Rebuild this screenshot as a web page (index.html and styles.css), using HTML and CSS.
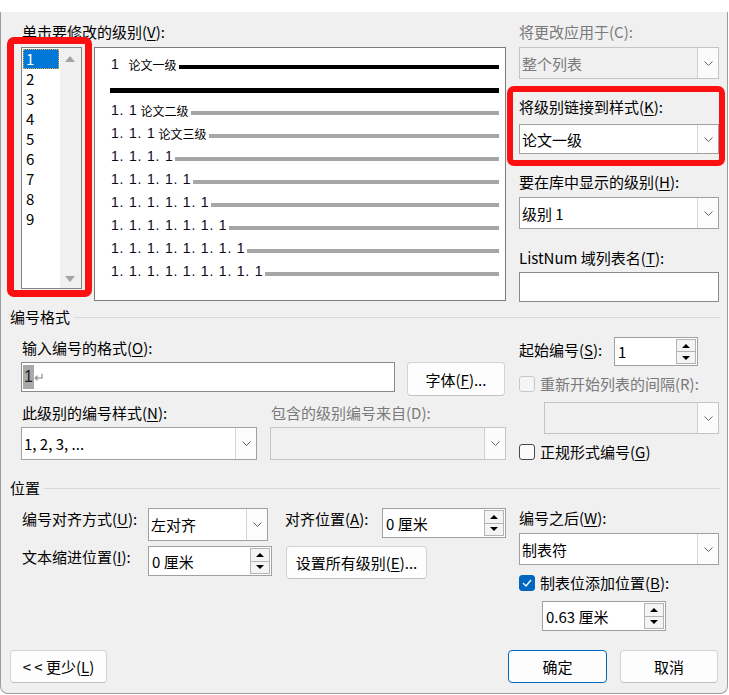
FILE: index.html
```html
<!DOCTYPE html>
<html lang="zh-CN">
<head>
<meta charset="utf-8">
<title>定义新多级列表</title>
<link rel="stylesheet" href="styles.css">
</head>
<body>
<div class="dialog">
  <div class="top">
    <div class="top-left">
      <div class="label lead">单击要修改的级别(<u>V</u>):</div>
      <div class="level-row">
        <div class="listbox">
          <ul class="list-items">
            <li class="sel">1</li><li>2</li><li>3</li><li>4</li><li>5</li><li>6</li><li>7</li><li>8</li><li>9</li>
          </ul>
          <div class="scroll">
            <svg width="10" height="6" viewBox="0 0 10 6"><polygon points="0,6 5,0 10,6" fill="#a3a3a3"/></svg>
            <svg width="10" height="6" viewBox="0 0 10 6"><polygon points="0,0 10,0 5,6" fill="#a3a3a3"/></svg>
          </div>
        </div>
        <div class="preview">
          <div class="pv-row"><span class="num">1</span><span class="pv-name n1">论文一级</span><span class="bar black"></span></div>
          <div class="pv-sep"></div>
          <div class="pv-row"><span class="num">1. 1</span><span class="pv-name">论文二级</span><span class="bar"></span></div>
          <div class="pv-row"><span class="num">1. 1. 1</span><span class="pv-name">论文三级</span><span class="bar"></span></div>
          <div class="pv-row"><span class="num">1. 1. 1. 1</span><span class="bar"></span></div>
          <div class="pv-row"><span class="num">1. 1. 1. 1. 1</span><span class="bar"></span></div>
          <div class="pv-row"><span class="num">1. 1. 1. 1. 1. 1</span><span class="bar"></span></div>
          <div class="pv-row"><span class="num">1. 1. 1. 1. 1. 1. 1</span><span class="bar"></span></div>
          <div class="pv-row"><span class="num">1. 1. 1. 1. 1. 1. 1. 1</span><span class="bar"></span></div>
          <div class="pv-row"><span class="num">1. 1. 1. 1. 1. 1. 1. 1. 1</span><span class="bar"></span></div>
        </div>
      </div>
    </div>
    <div class="top-right">
      <div class="label lead disabled">将更改应用于(C):</div>
      <div class="combo disabled-combo h32 mt5"><span class="combo-text">整个列表</span><span class="drop"><svg width="9" height="5" viewBox="0 0 9 5"><polyline points="0.5,0.5 4.5,4.5 8.5,0.5" fill="none" stroke="#6a6a6a" stroke-width="1"/></svg></span></div>
      <div class="label mt18">将级别链接到样式(<u>K</u>):</div>
      <div class="combo h30 mt7"><span class="combo-text">论文一级</span><span class="drop"><svg width="9" height="5" viewBox="0 0 9 5"><polyline points="0.5,0.5 4.5,4.5 8.5,0.5" fill="none" stroke="#5f5f5f" stroke-width="1"/></svg></span></div>
      <div class="label mt18">要在库中显示的级别(<u>H</u>):</div>
      <div class="combo h32 mt5"><span class="combo-text">级别 1</span><span class="drop"><svg width="9" height="5" viewBox="0 0 9 5"><polyline points="0.5,0.5 4.5,4.5 8.5,0.5" fill="none" stroke="#5f5f5f" stroke-width="1"/></svg></span></div>
      <div class="label mt19">ListNum 域列表名(<u>T</u>):</div>
      <div class="textbox h30 mt4"></div>
    </div>
  </div>

  <div class="sec-head first"><span class="sec-title">编号格式</span><span class="sec-line"></span></div>
  <div class="sec-body">
    <div class="sec-left">
      <div class="label mt11 pl1">输入编号的格式(<u>O</u>):</div>
      <div class="fmt-row">
        <div class="textbox fmt-box"><span class="field">1</span><span class="ret">↵</span></div>
        <div class="btn font-btn">字体(<u>F</u>)...</div>
      </div>
      <div class="pair-row labels">
        <div class="label pl1">此级别的编号样式(<u>N</u>):</div>
        <div class="label pl1 disabled">包含的级别编号来自(D):</div>
      </div>
      <div class="pair-row combos">
        <div class="combo h33"><span class="combo-text">1, 2, 3, ...</span><span class="drop"><svg width="9" height="5" viewBox="0 0 9 5"><polyline points="0.5,0.5 4.5,4.5 8.5,0.5" fill="none" stroke="#5f5f5f" stroke-width="1"/></svg></span></div>
        <div class="combo disabled-combo h33"><span class="combo-text"></span><span class="drop"><svg width="9" height="5" viewBox="0 0 9 5"><polyline points="0.5,0.5 4.5,4.5 8.5,0.5" fill="none" stroke="#6a6a6a" stroke-width="1"/></svg></span></div>
      </div>
    </div>
    <div class="sec-right">
      <div class="start-row">
        <div class="label start-label">起始编号(<u>S</u>):</div>
        <div class="spin start-spin"><span class="spin-text">1</span><span class="spin-btns"><span class="sb"><svg width="8" height="4" viewBox="0 0 8 4"><polygon points="0,4 4,0 8,4" fill="#000"/></svg></span><span class="sb"><svg width="8" height="4" viewBox="0 0 8 4"><polygon points="0,0 8,0 4,4" fill="#000"/></svg></span></span></div>
      </div>
      <div class="check-row mt10"><span class="cb cb-disabled"></span><span class="label disabled">重新开始列表的间隔(R):</span></div>
      <div class="combo disabled-combo h32 restart-combo"><span class="combo-text"></span><span class="drop"><svg width="9" height="5" viewBox="0 0 9 5"><polyline points="0.5,0.5 4.5,4.5 8.5,0.5" fill="none" stroke="#6a6a6a" stroke-width="1"/></svg></span></div>
      <div class="check-row mt10"><span class="cb"></span><span class="label">正规形式编号(<u>G</u>)</span></div>
    </div>
  </div>

  <div class="sec-head second"><span class="sec-title">位置</span><span class="sec-line"></span></div>
  <div class="sec-body">
    <div class="sec-left">
      <div class="pos-row r1">
        <div class="label pos-label">编号对齐方式(<u>U</u>):</div>
        <div class="combo h33 align-combo"><span class="combo-text">左对齐</span><span class="drop"><svg width="9" height="5" viewBox="0 0 9 5"><polyline points="0.5,0.5 4.5,4.5 8.5,0.5" fill="none" stroke="#5f5f5f" stroke-width="1"/></svg></span></div>
        <div class="label pos-label2">对齐位置(<u>A</u>):</div>
        <div class="spin w124"><span class="spin-text">0 厘米</span><span class="spin-btns"><span class="sb"><svg width="8" height="4" viewBox="0 0 8 4"><polygon points="0,4 4,0 8,4" fill="#000"/></svg></span><span class="sb"><svg width="8" height="4" viewBox="0 0 8 4"><polygon points="0,0 8,0 4,4" fill="#000"/></svg></span></span></div>
      </div>
      <div class="pos-row r2">
        <div class="label pos-label">文本缩进位置(<u>I</u>):</div>
        <div class="spin w124"><span class="spin-text">0 厘米</span><span class="spin-btns"><span class="sb"><svg width="8" height="4" viewBox="0 0 8 4"><polygon points="0,4 4,0 8,4" fill="#000"/></svg></span><span class="sb"><svg width="8" height="4" viewBox="0 0 8 4"><polygon points="0,0 8,0 4,4" fill="#000"/></svg></span></span></div>
        <div class="btn all-btn">设置所有级别(<u>E</u>)...</div>
      </div>
    </div>
    <div class="sec-right">
      <div class="label mt10">编号之后(<u>W</u>):</div>
      <div class="combo h32 mt5"><span class="combo-text">制表符</span><span class="drop"><svg width="9" height="5" viewBox="0 0 9 5"><polyline points="0.5,0.5 4.5,4.5 8.5,0.5" fill="none" stroke="#5f5f5f" stroke-width="1"/></svg></span></div>
      <div class="check-row mt10"><span class="cb cb-checked"><svg width="10" height="8" viewBox="0 0 10 8"><polyline points="1,4 4,7 9,1" fill="none" stroke="#fff" stroke-width="1.3"/></svg></span><span class="label">制表位添加位置(<u>B</u>):</span></div>
      <div class="spin w124 tab-spin"><span class="spin-text">0.63 厘米</span><span class="spin-btns"><span class="sb"><svg width="8" height="4" viewBox="0 0 8 4"><polygon points="0,4 4,0 8,4" fill="#000"/></svg></span><span class="sb"><svg width="8" height="4" viewBox="0 0 8 4"><polygon points="0,0 8,0 4,4" fill="#000"/></svg></span></span></div>
    </div>
  </div>

  <div class="footer">
    <div class="btn less-btn">&lt; &lt; 更少(<u>L</u>)</div>
    <div class="footer-right">
      <div class="btn primary ok-btn">确定</div>
      <div class="btn cancel-btn">取消</div>
    </div>
  </div>

  <div class="mark mark-list"></div>
  <div class="mark mark-style"></div>
</div>
</body>
</html>
```

FILE: styles.css
```css
* { box-sizing: border-box; }
html, body { margin: 0; padding: 0; background: #fff; }
body {
  font-family: "Noto Sans CJK SC", "Noto Sans", sans-serif;
  font-size: 15px;
  color: #000;
}
u { text-decoration-thickness: 1px; text-underline-offset: 2px; }

.dialog {
  position: relative;
  margin-top: 12px;
  width: 728px;
  height: 682px;
  background: #f0f0f0;
  border: 1px solid #9c9c9c;
  border-top: none;
  border-radius: 0 0 8px 8px;
  display: flex;
  flex-direction: column;
}

.label { height: 20px; line-height: 20px; white-space: nowrap; }
.disabled { color: #7a7a7a; }
.lead { margin-top: 10px; }
.pl1 { padding-left: 1px; }
.mt4 { margin-top: 4px; }
.mt5 { margin-top: 5px; }
.mt7 { margin-top: 7px; }
.mt10 { margin-top: 10px; }
.mt11 { margin-top: 11px; }
.mt18 { margin-top: 18px; }
.mt19 { margin-top: 19px; }
.h30 { height: 30px; }
.h32 { height: 32px; }
.h33 { height: 33px; }

/* top area */
.top { display: flex; }
.top-left { margin-left: 20px; width: 485px; }
.top-left > .label { padding-left: 1px; }
.level-row { display: flex; margin-top: 5px; }

.listbox {
  width: 61px;
  height: 242px;
  border: 1px solid #828282;
  background: #fff;
  display: flex;
}
.list-items {
  list-style: none;
  margin: 0;
  padding: 1px 0 0 1px;
  width: 38px;
}
.list-items li {
  height: 20px;
  line-height: 20px;
  width: 36px;
  padding-left: 3px;
}
.list-items li.sel {
  background: #0078d7;
  color: #fff;
  outline: 1px dotted #e9a24a;
  outline-offset: -1px;
}
.scroll {
  flex: 1;
  background: #f0f0f0;
  display: flex;
  flex-direction: column;
  justify-content: space-between;
  align-items: center;
  padding: 8px 2px 6px 0;
}

.preview {
  margin-left: 12px;
  width: 412px;
  height: 254px;
  border: 1px solid #7a7a7a;
  background: #fff;
  padding: 5px 6px 0 16px;
}
.pv-row { display: flex; align-items: center; height: 23px; }
.num {
  font-family: "Liberation Sans", Arial, sans-serif;
  font-size: 14px;
  letter-spacing: 0.8px;
  line-height: 23px;
  white-space: pre;
  color: #0a0a1a;
}
.pv-name { font-size: 12px; line-height: 23px; margin-left: 3px; white-space: nowrap; }
.pv-name.n1 { margin-left: 9px; }
.bar { flex: 1; height: 4px; margin-top: 5px; margin-left: 2px; background: #a6a6a6; }
.bar.black { background: #000; }
.pv-sep { height: 5px; background: #000; margin: 12px 0 6px -1px; }

.top-right { margin-left: 13px; width: 200px; }

/* controls */
.combo {
  display: flex;
  border: 1px solid #a0a0a0;
  background: #fff;
}
.combo-text {
  flex: 1;
  display: flex;
  align-items: center;
  padding-left: 2px;
  white-space: nowrap;
}
.drop {
  width: 21px;
  border-left: 1px solid #d6d6d6;
  background: #fcfcfc;
  display: flex;
  align-items: center;
  justify-content: center;
}
.disabled-combo { border-color: #c4c4c4; background: #f0f0f0; }
.disabled-combo .combo-text { color: #7a7a7a; }
.disabled-combo .drop { background: #fbfbfb; border-left-color: #cfcfcf; }

.textbox { border: 1px solid #8a8a8a; background: #fff; }

.spin {
  display: flex;
  height: 30px;
  border: 1px solid #a0a0a0;
  background: #fff;
}
.spin-text { flex: 1; display: flex; align-items: center; padding-left: 3px; white-space: nowrap; }
.spin-btns {
  width: 21px;
  display: flex;
  flex-direction: column;
  padding: 1px 1px 1px 0;
}
.sb {
  flex: 1;
  border: 1px solid #b4b4b4;
  background: #f4f4f4;
  display: flex;
  align-items: center;
  justify-content: center;
}
.sb + .sb { border-top: none; }
.w124 { width: 124px; }

.btn {
  height: 33px;
  border: 1px solid #d3d3d3;
  border-bottom-color: #c2c2c2;
  border-radius: 4px;
  background: #fdfdfd;
  display: flex;
  align-items: center;
  justify-content: center;
  white-space: nowrap;
}
.btn.primary { border: 1px solid #0067c0; }

.cb {
  width: 16px;
  height: 16px;
  border: 1px solid #4a4a4a;
  border-radius: 3px;
  background: #fbfbfb;
  flex: none;
  display: flex;
  align-items: center;
  justify-content: center;
}
.cb-disabled { border-color: #c8c8c8; background: #f5f5f5; }
.cb-checked { border-color: #0067c0; background: #0067c0; }
.check-row { display: flex; align-items: center; height: 16px; }
.check-row .label { margin-left: 5px; }

/* sections */
.sec-head { display: flex; align-items: center; height: 20px; padding-left: 9px; }
.sec-head.first { margin-top: 5px; }
.sec-head.second { margin-top: 18px; }
.sec-title { line-height: 20px; }
.sec-line { flex: 1; height: 1px; background: #d9d9d9; margin: 0 7px 0 4px; }

.sec-body { display: flex; }
.sec-left { margin-left: 20px; width: 485px; }
.sec-right { margin-left: 13px; width: 200px; }

.fmt-row { display: flex; align-items: flex-start; margin-top: 4px; }
.fmt-box {
  width: 374px;
  height: 30px;
  display: flex;
  align-items: center;
  padding-left: 1px;
}
.field {
  font-family: "Liberation Sans", Arial, sans-serif;
  font-size: 16px;
  line-height: 24px;
  background: #a9a9a9;
  color: #202020;
  padding: 0 1px 0 1px;
}
.ret { color: #8c8c8c; font-size: 13px; line-height: 24px; margin-left: 0; }
.font-btn { width: 98px; height: 34px; margin-left: 12px; }

.pair-row { display: grid; grid-template-columns: 236px 236px; column-gap: 13px; }
.pair-row.labels { margin-top: 7px; }
.pair-row.combos { margin-top: 4px; }

.start-row { display: flex; align-items: flex-start; margin-top: 10px; }
.start-label { width: 95px; margin-top: 3px; }
.start-spin { width: 84px; height: 29px; }
.restart-combo { margin-left: 25px; width: 175px; margin-top: 10px; }

.pos-row { display: flex; align-items: flex-start; }
.pos-row.r1 { margin-top: 10px; }
.pos-row.r2 { margin-top: 5px; }
.pos-label { width: 127px; padding-left: 1px; margin-top: 1px; }
.align-combo { width: 120px; }
.pos-label2 { width: 97px; margin-left: 17px; margin-top: 1px; }
.all-btn { width: 141px; margin-left: 14px; }
.tab-spin { margin-left: 23px; margin-top: 10px; }

.footer {
  margin-top: auto;
  display: flex;
  padding: 0 9px 10px 9px;
}
.less-btn { width: 97px; }
.footer-right { margin-left: auto; display: flex; gap: 13px; }
.ok-btn { width: 99px; }
.cancel-btn { width: 98px; }

/* red annotation boxes drawn over the dialog */
.mark {
  position: absolute;
  border: 7px solid #fa1010;
  border-radius: 7px;
  pointer-events: none;
}
.mark-list { left: 6px; top: 25px; width: 85px; height: 260px; }
.mark-style { left: 506px; top: 74px; width: 218px; height: 80px; border-width: 6px; }
```
